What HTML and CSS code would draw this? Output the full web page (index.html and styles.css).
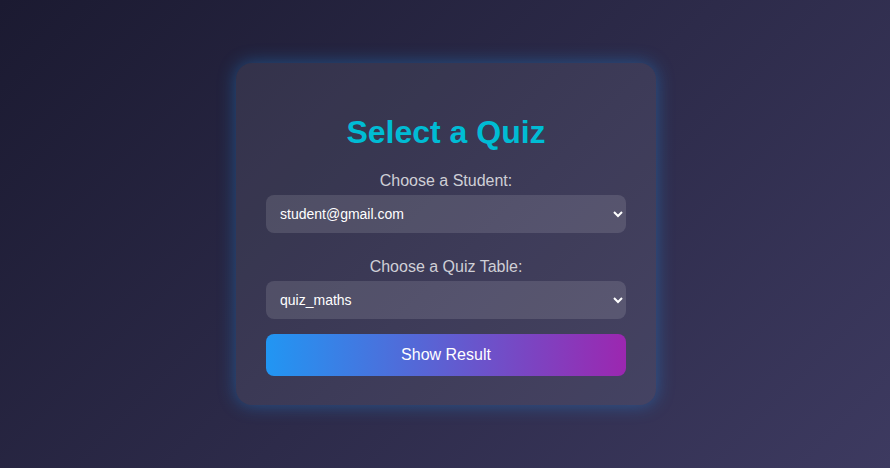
FILE: index.html
```html
<!DOCTYPE html>
<html lang="en">
<head>
<meta charset="utf-8">
<title>Select a Quiz</title>
<link rel="stylesheet" href="styles.css">
</head>
<body>
  <div class="card">
    <h2 class="title">Select a Quiz</h2>
    <form class="quiz-form">
      <label class="field-label" for="student">Choose a Student:</label>
      <select class="field-select" id="student">
        <option>student@gmail.com</option>
      </select>
      <label class="field-label field-label-gap" for="quiz">Choose a Quiz Table:</label>
      <select class="field-select" id="quiz">
        <option>quiz_maths</option>
      </select>
      <button type="button" class="submit-btn">Show Result</button>
    </form>
  </div>
</body>
</html>
```
FILE: styles.css
```css
html, body {
  margin: 0;
  padding: 0;
  height: 100%;
}
body {
  box-sizing: border-box;
  padding-left: 2px;
  font-family: "Liberation Sans", Arial, sans-serif;
  background: linear-gradient(135deg, #1b1a31 0%, #3d3a60 100%);
  display: flex;
  align-items: center;
  justify-content: center;
  min-height: 100vh;
}
.card {
  width: 420px;
  box-sizing: border-box;
  padding: 32px 30px 29px;
  background: rgba(255, 255, 255, 0.08);
  border-radius: 16px;
  box-shadow: 0 0 18px rgba(33, 150, 243, 0.4);
  text-align: center;
}
.title {
  margin: 19px 0 21px;
  font-size: 32px;
  font-weight: bold;
  color: #00bcd4;
  line-height: 37px;
}
.quiz-form {
  display: flex;
  flex-direction: column;
}
.field-label {
  display: block;
  font-size: 16px;
  line-height: 18px;
  color: #cfcfd6;
  margin-bottom: 5px;
}
.field-label-gap {
  margin-top: 25px;
}
.field-select {
  height: 38px;
  width: 100%;
  box-sizing: border-box;
  padding: 0 10px;
  font-family: "Liberation Sans", Arial, sans-serif;
  font-size: 14px;
  color: #ffffff;
  background-color: rgba(255, 255, 255, 0.12);
  border: none;
  border-radius: 8px;
  outline: none;
}
.field-select option {
  color: #000;
}
.submit-btn {
  margin-top: 15px;
  height: 42px;
  width: 100%;
  border: none;
  border-radius: 8px;
  background: linear-gradient(90deg, #2196f3 0%, #9c27b0 100%);
  color: #ffffff;
  font-family: "Liberation Sans", Arial, sans-serif;
  font-size: 16px;
  cursor: pointer;
}
```
